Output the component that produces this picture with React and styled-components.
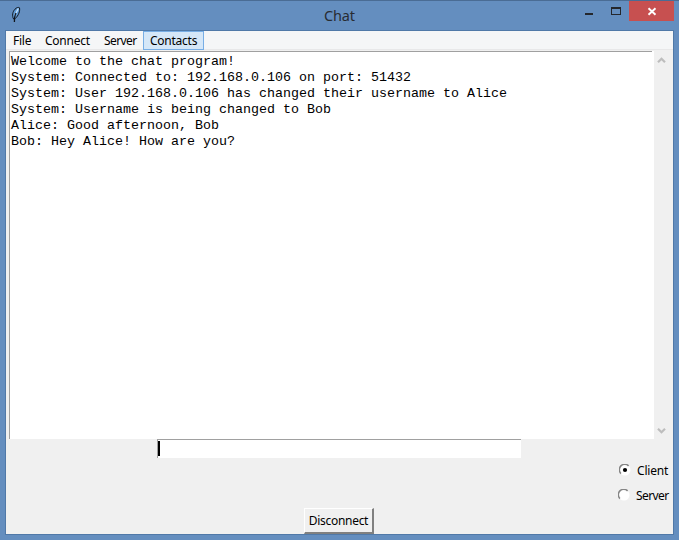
import React, { useState } from "react";
import styled, { createGlobalStyle } from "styled-components";

const GlobalStyle = createGlobalStyle`
  * { box-sizing: border-box; }
  body { margin: 0; font-family: "Noto Sans", "Open Sans", sans-serif; font-size: 12px; color: #000; }
`;

const Window = styled.div`
  width: 679px;
  height: 540px;
  display: flex;
  flex-direction: column;
  background: #648ebf;
  border-top: 1px solid #4a6c94;
  padding: 0 5px 5px;
  overflow: hidden;
`;

const TitleBar = styled.header`
  height: 29px;
  flex: none;
  display: grid;
  grid-template-columns: 104px 1fr 104px;
  align-items: start;
`;

const FeatherIcon = styled.svg`
  width: 12px;
  height: 18px;
  margin: 5px 0 0 5px;
`;

const Title = styled.h1`
  margin: 0;
  padding-top: 3px;
  text-align: center;
  font-size: 14.5px;
  font-weight: 400;
  line-height: 22px;
  letter-spacing: -0.15px;
  color: #282c32;
`;

const WindowControls = styled.div`
  display: flex;
  justify-content: flex-end;
`;

const ControlButton = styled.button`
  width: ${(p) => p.$width}px;
  height: 20px;
  padding: 0;
  border: 0;
  display: block;
  background: ${(p) => (p.$danger ? "#c75050" : "transparent")};
  svg { display: block; }
`;

const Client = styled.main`
  height: 505px;
  display: flex;
  flex-direction: column;
  background: #f0f0f0;
  border: 1px solid #5079a8;
`;

const MenuBar = styled.nav`
  height: 19px;
  flex: none;
  display: flex;
  background: #f5f6f7;
  border-bottom: 1px solid #e8e8e9;
`;

const MenuItem = styled.button`
  width: ${(p) => p.$width}px;
  height: 19px;
  flex: none;
  padding: 0 0 0 6px;
  border: 1px solid ${(p) => (p.$active ? "#78aee5" : "transparent")};
  background: ${(p) => (p.$active ? "#d5e7f8" : "transparent")};
  font: inherit;
  line-height: 18px;
  letter-spacing: ${(p) => p.$tracking}px;
  text-align: left;
  white-space: nowrap;
`;

const LogRow = styled.section`
  display: flex;
  height: 388px;
  margin: 1px 2px 0 3px;
  flex: none;
`;

const Log = styled.div`
  width: 645px;
  padding: 3px 0 0 1px;
  background: #fff;
  border-left: 1px solid #a0a0a0;
  position: relative;
  &::before {
    content: "";
    position: absolute;
    top: 0;
    left: 0;
    width: 642px;
    height: 1px;
    background: #a0a0a0;
  }
`;

const Message = styled.p`
  margin: 0;
  font: 13.333px/16px "Liberation Mono", monospace;
  white-space: pre;
`;

const ScrollBar = styled.div`
  width: 17px;
  display: flex;
  flex-direction: column;
  justify-content: space-between;
  padding: 5px 0 4px 3px;
`;

const Arrow = styled.svg`
  width: 9px;
  height: 8px;
  display: block;
`;

const Entry = styled.div`
  width: 364px;
  height: 19px;
  flex: none;
  margin-left: 151px;
  padding-top: 1px;
  background: #fff;
  border-top: 1px solid #a0a0a0;
  border-left: 1px solid #a0a0a0;
`;

const Caret = styled.div`
  width: 2px;
  height: 15px;
  background: #000;
`;

const Modes = styled.div`
  display: flex;
  flex-direction: column;
  align-items: flex-end;
  padding-right: 5px;
`;

const ModeOption = styled.label`
  height: 25px;
  display: flex;
  align-items: center;
  gap: 6px;
`;

const ModeText = styled.span`
  width: ${(p) => p.$width}px;
  white-space: nowrap;
  letter-spacing: ${(p) => p.$tracking}px;
`;

const RadioIcon = styled.svg`
  width: 12px;
  height: 12px;
  margin-top: -2px;
`;

const DisconnectButton = styled.button`
  width: 70px;
  height: 26px;
  flex: none;
  margin: 0 0 0 298px;
  padding: 0;
  background: #f0f0f0;
  border: solid;
  border-width: 1px 2px 2px 1px;
  border-color: #fff #808080 #808080 #fff;
  font: inherit;
  line-height: 22px;
  letter-spacing: -0.3px;
`;

const menus = [
  { name: "File", width: 32, tracking: -0.25 },
  { name: "Connect", width: 59, tracking: -0.25 },
  { name: "Server", width: 46, tracking: -0.6 },
  { name: "Contacts", width: 61, tracking: -0.25, active: true },
];

const messages = [
  "Welcome to the chat program!",
  "System: Connected to: 192.168.0.106 on port: 51432",
  "System: User 192.168.0.106 has changed their username to Alice",
  "System: Username is being changed to Bob",
  "Alice: Good afternoon, Bob",
  "Bob: Hey Alice! How are you?",
];

function Feather() {
  return (
    <FeatherIcon viewBox="0 0 12 18">
      <path d="M3.6 13C1.8 10 2.6 5.5 5 3.2 6.6 1.5 8.4 1 9.5 1.8 10.2 5 8.6 9.5 5.2 12.6Z" fill="#5f9bd8" stroke="#10151c" />
      <path d="M8.3 2.6Q6.8 6 4.6 9.5" fill="none" stroke="#c6e2fb" strokeWidth="1.3" />
      <path d="M6 7Q4.4 10 4.4 16" fill="none" stroke="#10151c" strokeWidth="1.3" />
    </FeatherIcon>
  );
}

function Radio({ checked }) {
  return (
    <RadioIcon viewBox="0 0 12 12">
      <circle cx="6" cy="6" r="5.5" fill="#fff" />
      <path d="M1.9 9.6A5 5 0 0 1 9.6 1.9" fill="none" stroke="#858585" strokeWidth="1.5" />
      {checked && <circle cx="6" cy="6" r="2.1" fill="#000" />}
    </RadioIcon>
  );
}

export default function App() {
  const [mode, setMode] = useState("Client");
  return (
    <>
      <GlobalStyle />
      <Window>
        <TitleBar>
          <Feather />
          <Title>Chat</Title>
          <WindowControls>
            <ControlButton $width={27} aria-label="Minimize">
              <svg width="27" height="20"><path d="M15 12h8v2h-8z" fill="#24272c" /></svg>
            </ControlButton>
            <ControlButton $width={32} aria-label="Maximize">
              <svg width="32" height="20" shapeRendering="crispEdges">
                <path d="M14 6h10v8H14zM15 8v5h8V8z" fill="#24272c" fillRule="evenodd" />
              </svg>
            </ControlButton>
            <ControlButton $width={45} $danger aria-label="Close">
              <svg width="45" height="20"><path d="M19.5 7.2l7 6.6M26.5 7.2l-7 6.6" stroke="#fff" strokeWidth="1.9" /></svg>
            </ControlButton>
          </WindowControls>
        </TitleBar>
        <Client>
          <MenuBar>
            {menus.map((m) => (
              <MenuItem key={m.name} $width={m.width} $active={m.active} $tracking={m.tracking}>{m.name}</MenuItem>
            ))}
          </MenuBar>
          <LogRow>
            <Log>
              {messages.map((m) => <Message key={m}>{m}</Message>)}
            </Log>
            <ScrollBar>
              <Arrow viewBox="0 0 9 8"><path d="M1 6.3l3.5-3.5L8 6.3" fill="none" stroke="#bdbdbd" strokeWidth="2.2" /></Arrow>
              <Arrow viewBox="0 0 9 8"><path d="M1 1.7l3.5 3.5L8 1.7" fill="none" stroke="#bdbdbd" strokeWidth="2.2" /></Arrow>
            </ScrollBar>
          </LogRow>
          <Entry><Caret /></Entry>
          <Modes>
            <ModeOption onClick={() => setMode("Client")}>
              <Radio checked={mode === "Client"} />
              <ModeText $width={31} $tracking={-0.2}>Client</ModeText>
            </ModeOption>
            <ModeOption onClick={() => setMode("Server")}>
              <Radio checked={mode === "Server"} />
              <ModeText $width={32} $tracking={-0.6}>Server</ModeText>
            </ModeOption>
          </Modes>
          <DisconnectButton>Disconnect</DisconnectButton>
        </Client>
      </Window>
    </>
  );
}
